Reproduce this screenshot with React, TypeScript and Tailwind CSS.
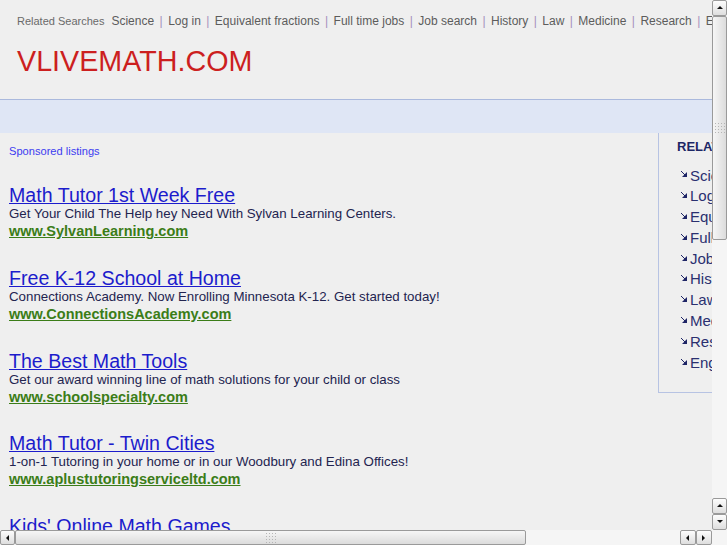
const navItems = [
  "Science",
  "Log in",
  "Equivalent fractions",
  "Full time jobs",
  "Job search",
  "History",
  "Law",
  "Medicine",
  "Research",
  "Engineering",
];

const ads = [
  {
    title: "Math Tutor 1st Week Free",
    desc: "Get Your Child The Help hey Need With Sylvan Learning Centers.",
    url: "www.SylvanLearning.com",
  },
  {
    title: "Free K-12 School at Home",
    desc: "Connections Academy. Now Enrolling Minnesota K-12. Get started today!",
    url: "www.ConnectionsAcademy.com",
  },
  {
    title: "The Best Math Tools",
    desc: "Get our award winning line of math solutions for your child or class",
    url: "www.schoolspecialty.com",
  },
  {
    title: "Math Tutor - Twin Cities",
    desc: "1-on-1 Tutoring in your home or in our Woodbury and Edina Offices!",
    url: "www.aplustutoringserviceltd.com",
  },
  {
    title: "Kids' Online Math Games",
    desc: "Fun math practice for kids. Try it free today!",
    url: "www.mathgames.com",
  },
];

function Arrow({ dir }: { dir: "up" | "down" | "left" | "right" }) {
  const pts = {
    up: "1,5 4,2 7,5",
    down: "1,2 4,5 7,2",
    left: "5,1 2,4 5,7",
    right: "2,1 5,4 2,7",
  }[dir];
  return (
    <svg width="8" height="8" viewBox="0 0 8 8">
      <polygon points={pts} fill="#111" />
    </svg>
  );
}

function ScrollButton({ dir }: { dir: "up" | "down" | "left" | "right" }) {
  return (
    <div className="flex h-[16px] w-[15px] shrink-0 items-center justify-center rounded-[2px] border border-[#9a9a9a] bg-gradient-to-b from-[#fdfdfd] to-[#dedede]">
      <Arrow dir={dir} />
    </div>
  );
}

function Grip() {
  return (
    <div className="grid grid-cols-4 gap-[2px]">
      {Array.from({ length: 16 }).map((_, i) => (
        <span key={i} className="h-px w-px bg-[#b5b5b5]" />
      ))}
    </div>
  );
}

function Bullet() {
  return (
    <svg width="6" height="6" viewBox="0 0 6 6" className="mr-[3px] -mt-[3px] shrink-0">
      <polygon points="6,1 6,6 1,6" fill="#1e2566" />
      <line x1="0" y1="0" x2="4" y2="4" stroke="#1e2566" strokeWidth="1" />
    </svg>
  );
}

export default function App() {
  return (
    <div
      className="flex h-[545px] w-[727px] flex-col overflow-hidden bg-[#efefef]"
      style={{ fontFamily: '"Liberation Sans", Arial, sans-serif' }}
    >
      <div className="flex h-[530px]">
        <div className="h-[530px] w-[712px] overflow-hidden">
          <div className="w-[920px]">
            {/* header */}
            <div className="pl-[17px] pt-[14px]">
              <div className="flex items-baseline whitespace-nowrap leading-[14px]">
                <span className="mr-[7px] text-[11px] text-[#6a6a6a]">Related Searches</span>
                {navItems.map((item, i) => (
                  <span key={item} className="flex items-baseline text-[12px] text-[#5c5c5c]">
                    {i > 0 && <span className="mx-[5.45px] text-[#a591bd]">|</span>}
                    <a href="#">{item}</a>
                  </span>
                ))}
              </div>
              <div className="mt-[17px] text-[28.7px] leading-[32px] text-[#cc1f1f]">VLIVEMATH.COM</div>
            </div>

            <div className="mt-[22px] h-[34px] border-t border-[#aab9dd] bg-[#dfe6f5]" />

            {/* body */}
            <div className="flex">
              <div className="w-[658px] pl-[9px] pt-[11px]">
                <div className="text-[11.1px] leading-[14px] text-[#3c3cf0]">Sponsored listings</div>
                <div className="mt-[26px]">
                  {ads.map((ad) => (
                    <div key={ad.title} className="mb-[26.8px]">
                      <a href="#" className="block text-[19.6px] leading-[22px] text-[#1c1ccc] underline">
                        {ad.title}
                      </a>
                      <div className="text-[13.3px] leading-[16px] text-[#23244f]">{ad.desc}</div>
                      <a href="#" className="block text-[14.5px] font-bold leading-[18px] text-[#3b7d18] underline">
                        {ad.url}
                      </a>
                    </div>
                  ))}
                </div>
              </div>

              <div className="h-[260px] w-[240px] border-b border-l border-[#b7c3e3] pl-[18px] pt-[6px]">
                <div className="text-[13px] font-bold leading-[16px] text-[#1d2766]">RELATED SEARCHES</div>
                <ul className="mt-[10.5px] pl-[4px]">
                  {navItems.map((item) => (
                    <li key={item} className="flex items-center text-[15px] leading-[20.8px] text-[#2a3070]">
                      <Bullet />
                      <a href="#">{item}</a>
                    </li>
                  ))}
                </ul>
              </div>
            </div>
          </div>
        </div>

        {/* vertical scrollbar */}
        <div className="flex w-[15px] flex-col bg-[#f5f5f5]">
          <ScrollButton dir="up" />
          <div className="flex h-[224px] items-center justify-center rounded-[2px] border border-[#9a9a9a] bg-gradient-to-r from-[#f6f6f6] to-[#dcdcdc]">
            <Grip />
          </div>
          <div className="flex-1" />
          <ScrollButton dir="up" />
          <ScrollButton dir="down" />
        </div>
      </div>

      {/* horizontal scrollbar */}
      <div className="flex h-[15px]">
        <div className="flex w-[712px] bg-[#f5f5f5]">
          <div className="flex h-[15px] w-[15px] items-center justify-center rounded-[2px] border border-[#9a9a9a] bg-gradient-to-b from-[#fdfdfd] to-[#dedede]">
            <Arrow dir="left" />
          </div>
          <div className="flex h-[15px] w-[511px] items-center justify-center rounded-[2px] border border-[#9a9a9a] bg-gradient-to-b from-[#f6f6f6] to-[#dcdcdc]">
            <Grip />
          </div>
          <div className="flex-1" />
          <div className="flex h-[15px] w-[16px] items-center justify-center rounded-[2px] border border-[#9a9a9a] bg-gradient-to-b from-[#fdfdfd] to-[#dedede]">
            <Arrow dir="left" />
          </div>
          <div className="flex h-[15px] w-[16px] items-center justify-center rounded-[2px] border border-[#9a9a9a] bg-gradient-to-b from-[#fdfdfd] to-[#dedede]">
            <Arrow dir="right" />
          </div>
        </div>
        <div className="w-[15px] bg-[#f5f5f5]" />
      </div>
    </div>
  );
}
